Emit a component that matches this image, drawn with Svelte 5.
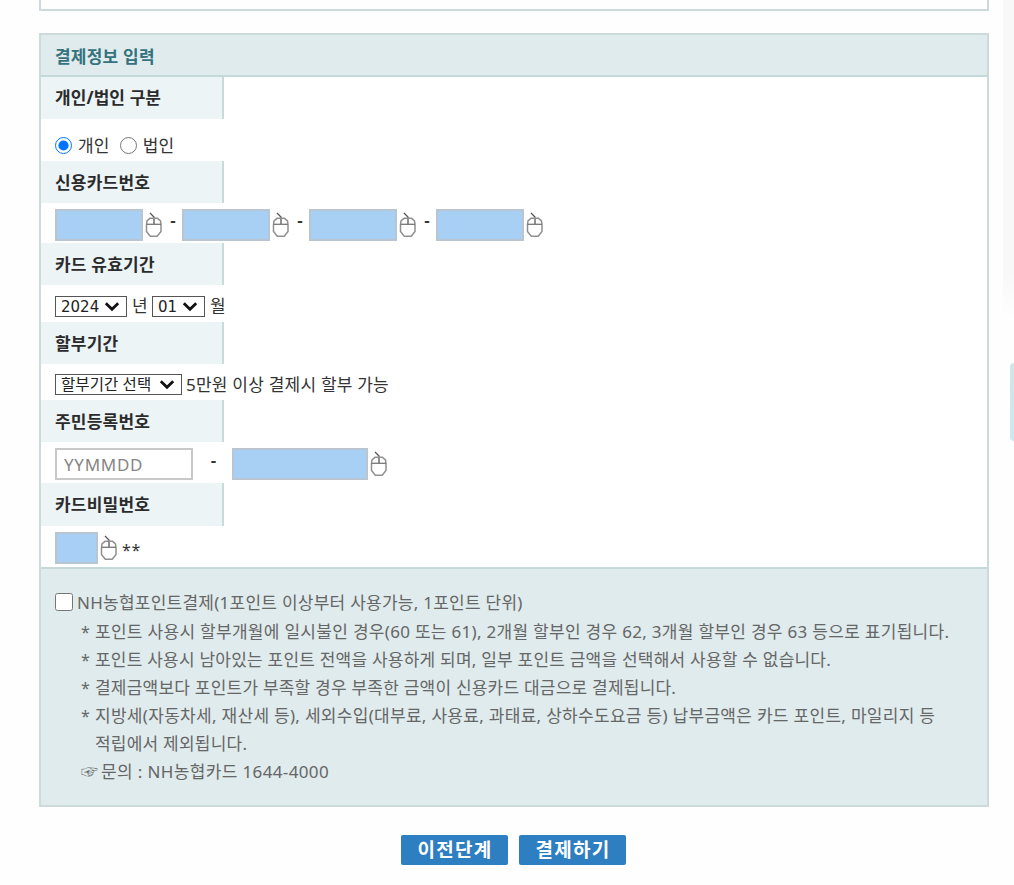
<script>
	let kind = $state('personal');
	let year = $state('2024');
	let month = $state('01');
	let usePoint = $state(false);

	const months = ['01', '02', '03', '04', '05', '06', '07', '08', '09', '10', '11', '12'];

	const notes = [
		['포인트 사용시 할부개월에 일시불인 경우(60 또는 61), 2개월 할부인 경우 62, 3개월 할부인 경우 63 등으로 표기됩니다.'],
		['포인트 사용시 남아있는 포인트 전액을 사용하게 되며, 일부 포인트 금액을 선택해서 사용할 수 없습니다.'],
		['결제금액보다 포인트가 부족할 경우 부족한 금액이 신용카드 대금으로 결제됩니다.'],
		['지방세(자동차세, 재산세 등), 세외수입(대부료, 사용료, 과태료, 상하수도요금 등) 납부금액은 카드 포인트, 마일리지 등', '적립에서 제외됩니다.']
	];
</script>

{#snippet mouse()}
	<svg class="mouse" width="18" height="26" viewBox="0 0 18 26" fill="none">
		<path d="M5 1 L9 5 V12" stroke="#555" stroke-width="1.3" />
		<path d="M1.5 12.5 L2 8.8 L5 6.3 H12.5 L15.5 8.8 L16 12.5 V19.5 L12.2 24.3 H5.3 L1.5 19.5 Z" stroke="#909090" stroke-width="1.5" />
		<path d="M1.5 12.3 H16" stroke="#777" stroke-width="1.3" />
	</svg>
{/snippet}

{#snippet chevron()}
	<svg class="chevron" width="16" height="11" viewBox="0 0 16 11" fill="none">
		<path d="M1.8 2.2 L8 8.2 L14.2 2.2" stroke="#111" stroke-width="2.8" />
	</svg>
{/snippet}

<main>
	<div class="previous"></div>

	<section class="panel">
		<h2>결제정보 입력</h2>

		<div class="label first">개인/법인 구분</div>
		<div class="value kind">
			<label><input type="radio" value="personal" bind:group={kind} /><span>개인</span></label>
			<label><input type="radio" value="company" bind:group={kind} /><span>법인</span></label>
		</div>

		<div class="label">신용카드번호</div>
		<div class="value card">
			{#each [0, 1, 2, 3] as part}
				{#if part > 0}<span class="dash">-</span>{/if}
				<input class="secure" type="password" readonly />
				{@render mouse()}
			{/each}
		</div>

		<div class="label">카드 유효기간</div>
		<div class="value expiry">
			<div class="select year">
				<select bind:value={year}>
					<option>2024</option>
					<option>2025</option>
				</select>
				{@render chevron()}
			</div>
			<span class="unit">년</span>
			<div class="select month">
				<select bind:value={month}>
					{#each months as m}
						<option>{m}</option>
					{/each}
				</select>
				{@render chevron()}
			</div>
			<span class="unit">월</span>
		</div>

		<div class="label">할부기간</div>
		<div class="value period">
			<div class="select installment">
				<select>
					<option>할부기간 선택</option>
				</select>
				{@render chevron()}
			</div>
			<span class="hint">5만원 이상 결제시 할부 가능</span>
		</div>

		<div class="label">주민등록번호</div>
		<div class="value resident">
			<input class="birth" type="text" placeholder="YYMMDD" />
			<span class="dash">-</span>
			<input class="secure long" type="password" readonly />
			{@render mouse()}
		</div>

		<div class="label last">카드비밀번호</div>
		<div class="value pin">
			<input class="secure short" type="password" readonly />
			{@render mouse()}
			<span class="stars">**</span>
		</div>

		<div class="point">
			<label class="use"><input type="checkbox" bind:checked={usePoint} /><span>NH농협포인트결제(1포인트 이상부터 사용가능, 1포인트 단위)</span></label>
			<ul>
				{#each notes as lines}
					<li>
						<span class="star">*</span>
						<div>
							{#each lines as line}
								<p class:long={line.length > 60}>{line}</p>
							{/each}
						</div>
					</li>
				{/each}
				<li class="contact"><span class="hand">☞</span><p>문의 : NH농협카드 1644-4000</p></li>
			</ul>
		</div>
	</section>

	<div class="buttons">
		<button type="button">이전단계</button>
		<button type="button">결제하기</button>
	</div>

	<div class="edge"></div>
	<div class="tab"></div>
</main>

<style>
	:global(body) {
		background: #fefefe;
		overflow: hidden;
	}

	main {
		position: relative;
		box-sizing: border-box;
		width: 1014px;
		height: 885px;
		padding: 0 25px 0 39px;
		overflow: hidden;
		font-family: "Noto Sans", "Noto Sans CJK KR", sans-serif;
		font-size: 17px;
		color: #333;
		letter-spacing: 0.22px;
		white-space: nowrap;
	}

	.previous {
		box-sizing: border-box;
		height: 11px;
		border: solid #cddadb;
		border-width: 0 2px 2px;
	}

	.panel {
		box-sizing: border-box;
		height: 774px;
		margin-top: 22px;
		border: 2px solid #cddadb;
		background: #fff;
	}

	h2 {
		box-sizing: border-box;
		height: 42px;
		margin: 0;
		padding-left: 14px;
		border-bottom: 2px solid #c5d8da;
		background: #dfebec;
		font-size: 17px;
		font-weight: 600;
		line-height: 44px;
		color: #35727e;
	}

	.label {
		box-sizing: border-box;
		width: 183px;
		height: 42px;
		padding-left: 14px;
		border-right: 2px solid #c9dadd;
		background: #ecf4f6;
		font-weight: 700;
		line-height: 44px;
		color: #2b2b2b;
	}

	.label.first {
		line-height: 42px;
		letter-spacing: 0.1px;
	}

	.label.last {
		height: 43px;
	}

	.value {
		display: flex;
		align-items: center;
		box-sizing: border-box;
		height: 40px;
		padding-left: 14px;
	}

	.value.kind {
		height: 42px;
		padding-top: 11px;
	}

	.value.expiry {
		height: 37px;
		padding-top: 5px;
	}

	.value.period {
		height: 36px;
		padding-top: 5px;
	}

	.value.resident,
	.value.pin {
		height: 41px;
	}

	.kind label {
		display: flex;
		align-items: center;
		margin-right: 10px;
	}

	.kind input {
		width: 17px;
		height: 17px;
		margin: 0 6px 0 0;
	}

	.kind span {
		padding-bottom: 2px;
	}

	.secure,
	.birth {
		box-sizing: border-box;
		width: 88px;
		height: 32px;
		margin: 3px 0 0;
		padding: 0 8px;
		border: 2px solid #b9c6d1;
		background: #a8d0f5;
		font: 17px "Noto Sans", sans-serif;
	}

	.secure.long {
		width: 136px;
	}

	.secure.short {
		width: 43px;
	}

	.birth {
		width: 138px;
		padding: 0 7px;
		border-color: #c8c8c8;
		background: #fff;
		letter-spacing: 0.7px;
	}

	.birth::placeholder {
		color: #858585;
	}

	.mouse {
		flex: none;
		margin: 3px 0 0 2px;
	}

	.dash {
		width: 19px;
		padding: 0 0 5px 1px;
		box-sizing: border-box;
		font-weight: 600;
		text-align: center;
	}

	.resident .dash {
		width: 39px;
		padding-left: 2px;
	}

	.stars {
		margin: 6px 0 0 4px;
		font-size: 16px;
		letter-spacing: 0.8px;
	}

	.select {
		position: relative;
		height: 21px;
	}

	select {
		display: block;
		box-sizing: border-box;
		width: 100%;
		height: 21px;
		margin: 0;
		padding: 1px 0 0 5px;
		appearance: none;
		border: 1px solid #555;
		border-radius: 0;
		background: #fff;
		font: 15px/19px "DejaVu Sans", sans-serif;
		color: #222;
	}

	.chevron {
		position: absolute;
		top: 5px;
		right: 7px;
		pointer-events: none;
	}

	.year {
		width: 72px;
	}

	.month {
		width: 53px;
	}

	.installment {
		width: 127px;
	}

	.installment select {
		padding-top: 0;
		font: 15.5px/15px "Noto Sans", "Noto Sans CJK KR", sans-serif;
		letter-spacing: 0.1px;
	}

	.unit {
		margin: 0 4px 0 5px;
		padding-bottom: 3px;
	}

	.hint {
		margin-left: 4px;
		padding-bottom: 2px;
	}

	.point {
		box-sizing: border-box;
		height: 238px;
		padding: 20px 0 0 14px;
		border-top: 2px solid #c5d8da;
		background: #dfebec;
		line-height: 28px;
		color: #666;
	}

	.use {
		display: flex;
		align-items: center;
		height: 28px;
		letter-spacing: 0.25px;
	}

	.use input {
		width: 18px;
		height: 18px;
		margin: 0 4px 2px 0;
	}

	ul {
		margin: 1px 0 0;
		padding: 0 0 0 26px;
		list-style: none;
	}

	li {
		display: flex;
	}

	p {
		margin: 0;
	}

	p.long {
		letter-spacing: 0.295px;
	}

	.star {
		width: 14px;
		height: 28px;
		font-size: 16px;
	}

	.hand {
		width: 20px;
	}

	.contact p {
		letter-spacing: 0.36px;
	}

	.buttons {
		display: flex;
		gap: 11px;
		margin: 28px 0 0 362px;
	}

	button {
		width: 107px;
		height: 30px;
		padding: 0 0 0 1px;
		border: 0;
		border-radius: 2px;
		background: #2e7ec2;
		font: bold 19px/26px "Noto Sans", "Noto Sans CJK KR", sans-serif;
		letter-spacing: 1.3px;
		color: #fff;
	}

	.edge {
		position: absolute;
		top: 0;
		right: 0;
		width: 11px;
		height: 320px;
		background: linear-gradient(#f8f8f8 85%, #fefefe);
	}

	.tab {
		position: absolute;
		top: 363px;
		right: 0;
		width: 4px;
		height: 78px;
		border-radius: 4px 0 0 4px;
		background: linear-gradient(#cfe6e6, #cde8f3);
	}
</style>
